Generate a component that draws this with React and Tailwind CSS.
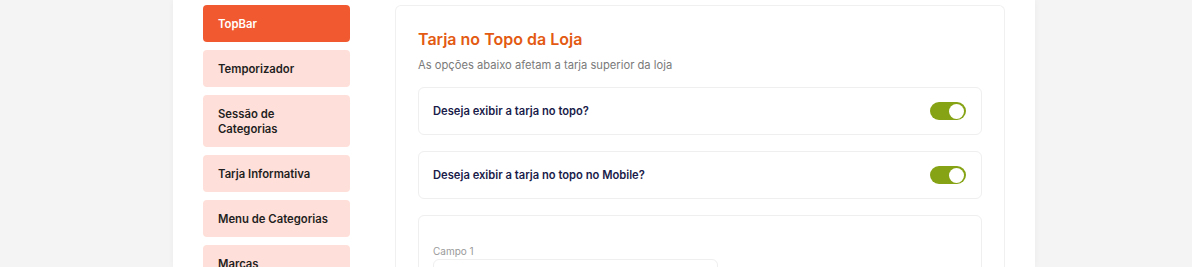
import { useState } from 'react';

const menu = ['TopBar', 'Temporizador', 'Sessão de Categorias', 'Tarja Informativa', 'Menu de Categorias', 'Marcas'];

function Toggle({ on, onChange }) {
    return (
        <button
            onClick={onChange}
            className={`flex h-[18px] w-[36px] items-center rounded-full p-[2px] ${on ? 'justify-end bg-[#86a315]' : 'justify-start bg-gray-300'}`}
        >
            <span className="h-[15px] w-[15px] rounded-full bg-white" />
        </button>
    );
}

function OptionCard({ label }) {
    const [on, setOn] = useState(true);
    return (
        <div className="flex h-[48px] items-center justify-between rounded-md border border-[#efefef] bg-white pl-[14px] pr-[15px]">
            <span className="text-[11.2px] font-semibold text-[#1a1c4a]">{label}</span>
            <Toggle on={on} onChange={() => setOn(!on)} />
        </div>
    );
}

export default function App() {
    const [active, setActive] = useState('TopBar');

    return (
        <div className="flex h-[267px] overflow-hidden bg-[#f4f4f4]" style={{ fontFamily: 'Inter, "Noto Sans", sans-serif' }}>
            <div className="ml-[173px] flex w-[862px] gap-[45px] bg-white pl-[30px] pt-[5px] shadow-[0_0_6px_rgba(0,0,0,0.04)]">
                {/* menu lateral */}
                <nav className="flex w-[147px] shrink-0 flex-col gap-[8px]">
                    {menu.map((item) => (
                        <button
                            key={item}
                            onClick={() => setActive(item)}
                            className={`rounded-[4px] px-[15px] pb-[10px] pt-[12px] text-left text-[11.3px] font-semibold leading-[15px] ${active === item ? 'bg-[#f15a31] text-white' : 'bg-[#ffdfd9] text-[#1f1f1f]'}`}
                        >
                            {item}
                        </button>
                    ))}
                </nav>

                {/* painel */}
                <section className="flex w-[610px] shrink-0 flex-col rounded-t-md border border-b-0 border-[#f0f0f0] px-[22px] pt-[21px]">
                    <h2 className="text-[16px] font-semibold leading-[24px] text-[#e35a12]">Tarja no Topo da Loja</h2>
                    <p className="mt-[6px] text-[11.2px] leading-[16px] text-[#7a7a7a]">As opções abaixo afetam a tarja superior da loja</p>

                    <div className="mt-[14px] flex flex-col gap-[16px]">
                        <OptionCard label="Deseja exibir a tarja no topo?" />
                        <OptionCard label="Deseja exibir a tarja no topo no Mobile?" />
                        <div className="rounded-md border border-[#efefef] px-[14px] pb-[20px] pt-[29px]">
                            <label className="block text-[10px] leading-[12px] text-[#9a9a9a]">Campo 1</label>
                            <input type="text" className="mt-[2px] h-[36px] w-[285px] rounded-md border border-[#efefef] px-2 text-[12px] outline-none" />
                        </div>
                    </div>
                </section>
            </div>
        </div>
    );
}
